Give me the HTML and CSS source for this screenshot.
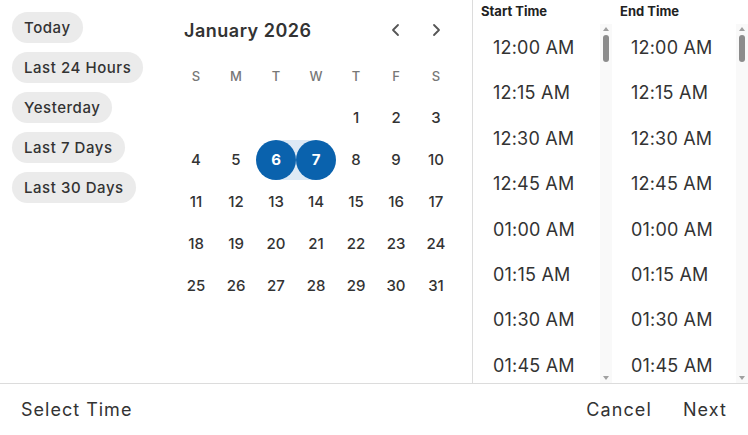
FILE: index.html
```html
<!DOCTYPE html>
<html lang="en">
<head>
  <meta charset="UTF-8" />
  <title>Select Time</title>
  <link rel="stylesheet" href="styles.css">
</head>
<body>
  <div class="picker">
    <div class="main">
      <aside class="presets">
        <button class="chip">Today</button>
        <button class="chip">Last 24 Hours</button>
        <button class="chip">Yesterday</button>
        <button class="chip">Last 7 Days</button>
        <button class="chip">Last 30 Days</button>
      </aside>

      <section class="calendar">
        <div class="cal-head">
          <span class="month">January 2026</span>
          <button class="nav" aria-label="Previous month">
            <svg width="12" height="14" viewBox="0 0 12 14"><path d="M8 2 L3 7 L8 12" fill="none" stroke="#555" stroke-width="1.8" stroke-linecap="round" stroke-linejoin="round"/></svg>
          </button>
          <button class="nav" aria-label="Next month">
            <svg width="12" height="14" viewBox="0 0 12 14"><path d="M4 2 L9 7 L4 12" fill="none" stroke="#555" stroke-width="1.8" stroke-linecap="round" stroke-linejoin="round"/></svg>
          </button>
        </div>
        <div class="grid weekdays">
          <span>S</span><span>M</span><span>T</span><span>W</span><span>T</span><span>F</span><span>S</span>
        </div>
        <div class="grid days">
          <span class="cell"></span><span class="cell"></span><span class="cell"></span><span class="cell"></span>
          <span class="cell"><b class="day">1</b></span>
          <span class="cell"><b class="day">2</b></span>
          <span class="cell"><b class="day">3</b></span>
          <span class="cell"><b class="day">4</b></span>
          <span class="cell"><b class="day">5</b></span>
          <span class="cell range-start"><b class="day selected">6</b></span>
          <span class="cell range-end"><b class="day selected">7</b></span>
          <span class="cell"><b class="day">8</b></span>
          <span class="cell"><b class="day">9</b></span>
          <span class="cell"><b class="day">10</b></span>
          <span class="cell"><b class="day">11</b></span>
          <span class="cell"><b class="day">12</b></span>
          <span class="cell"><b class="day">13</b></span>
          <span class="cell"><b class="day">14</b></span>
          <span class="cell"><b class="day">15</b></span>
          <span class="cell"><b class="day">16</b></span>
          <span class="cell"><b class="day">17</b></span>
          <span class="cell"><b class="day">18</b></span>
          <span class="cell"><b class="day">19</b></span>
          <span class="cell"><b class="day">20</b></span>
          <span class="cell"><b class="day">21</b></span>
          <span class="cell"><b class="day">22</b></span>
          <span class="cell"><b class="day">23</b></span>
          <span class="cell"><b class="day">24</b></span>
          <span class="cell"><b class="day">25</b></span>
          <span class="cell"><b class="day">26</b></span>
          <span class="cell"><b class="day">27</b></span>
          <span class="cell"><b class="day">28</b></span>
          <span class="cell"><b class="day">29</b></span>
          <span class="cell"><b class="day">30</b></span>
          <span class="cell"><b class="day">31</b></span>
        </div>
      </section>

      <section class="times">
        <div class="time-col start">
          <div class="time-head">Start Time</div>
          <div class="time-body">
            <ul class="time-list">
              <li>12:00 AM</li>
              <li>12:15 AM</li>
              <li>12:30 AM</li>
              <li>12:45 AM</li>
              <li>01:00 AM</li>
              <li>01:15 AM</li>
              <li>01:30 AM</li>
              <li>01:45 AM</li>
            </ul>
            <div class="scrollbar">
              <span class="arrow up"></span>
              <span class="thumb"></span>
              <span class="track"></span>
              <span class="arrow down"></span>
            </div>
          </div>
        </div>
        <div class="time-col end">
          <div class="time-head">End Time</div>
          <div class="time-body">
            <ul class="time-list">
              <li>12:00 AM</li>
              <li>12:15 AM</li>
              <li>12:30 AM</li>
              <li>12:45 AM</li>
              <li>01:00 AM</li>
              <li>01:15 AM</li>
              <li>01:30 AM</li>
              <li>01:45 AM</li>
            </ul>
            <div class="scrollbar">
              <span class="arrow up"></span>
              <span class="thumb"></span>
              <span class="track"></span>
              <span class="arrow down"></span>
            </div>
          </div>
        </div>
      </section>
    </div>

    <footer class="footer">
      <span class="footer-title">Select Time</span>
      <div class="actions">
        <button class="link">Cancel</button>
        <button class="link">Next</button>
      </div>
    </footer>
  </div>
</body>
</html>
```

FILE: styles.css
```css
body {
  font-family: Inter, "Noto Sans", sans-serif;
  background: #fff;
  color: #333;
  margin: 0;
  padding: 0;
}
button {
  font-family: inherit;
  border: none;
  background: none;
  padding: 0;
  color: inherit;
  cursor: pointer;
}
.picker {
  width: 748px;
  height: 435px;
  display: flex;
  flex-direction: column;
}
.main {
  height: 383px;
  display: flex;
  border-bottom: 1px solid #dcdcdc;
}

/* presets */
.presets {
  width: 164px;
  padding: 12px 0 0 12px;
  display: flex;
  flex-direction: column;
  align-items: flex-start;
  gap: 9px;
}
.chip {
  height: 31px;
  padding: 0 12px;
  border-radius: 16px;
  background: #ebebeb;
  font-size: 15px;
  font-weight: 500;
  letter-spacing: 0.55px;
  color: #333;
}

/* calendar */
.calendar {
  width: 280px;
  padding-top: 9px;
}
.cal-head {
  height: 42px;
  margin-bottom: 4px;
  display: flex;
  align-items: center;
}
.month {
  flex: 1;
  padding-left: 8px;
  font-size: 18px;
  font-weight: 600;
  letter-spacing: 0.5px;
  color: #333;
}
.nav {
  width: 40px;
  height: 40px;
  display: flex;
  align-items: center;
  justify-content: center;
}
.grid {
  display: grid;
  grid-template-columns: repeat(7, 40px);
}
.weekdays span {
  height: 42px;
  line-height: 42px;
  text-align: center;
  font-size: 13px;
  font-weight: 500;
  color: #777;
}
.cell {
  height: 40px;
  padding: 1px 0;
  background-clip: content-box;
}
.day {
  display: block;
  width: 40px;
  height: 40px;
  line-height: 40px;
  text-align: center;
  border-radius: 50%;
  font-size: 15px;
  font-weight: 500;
  color: #333;
}
.day.selected {
  background: #0a62ad;
  color: #fff;
  font-weight: 700;
}
.range-start {
  background-image: linear-gradient(90deg, transparent 50%, #dde9f5 50%);
}
.range-end {
  background-image: linear-gradient(90deg, #dde9f5 50%, transparent 50%);
}

/* time lists */
.times {
  flex: 1;
  margin-left: 16px;
  border-left: 1px solid #dcdcdc;
  display: flex;
}
.time-col {
  display: flex;
  flex-direction: column;
}
.time-col.start {
  width: 139px;
}
.time-col.end {
  flex: 1;
}
.time-head {
  height: 24px;
  line-height: 22px;
  padding-left: 8px;
  font-size: 13px;
  font-weight: 700;
  color: #222;
}
.time-body {
  flex: 1;
  display: flex;
  overflow: hidden;
}
.time-list {
  flex: 1;
  list-style: none;
  margin: 0;
  padding: 1px 0 0;
  overflow: hidden;
}
.time-list li {
  height: 45.4px;
  line-height: 46px;
  padding-left: 20px;
  font-size: 18px;
  letter-spacing: 0.2px;
  color: #333;
}
.end .time-list li {
  padding-left: 19px;
}
.scrollbar {
  width: 12px;
  flex-shrink: 0;
  display: flex;
  flex-direction: column;
  align-items: center;
  background: #f9f9f9;
}
.arrow {
  width: 0;
  height: 0;
  border-left: 3px solid transparent;
  border-right: 3px solid transparent;
}
.arrow.up {
  margin-top: 3px;
  border-bottom: 4px solid #a0a0a0;
}
.arrow.down {
  margin-bottom: 3px;
  border-top: 4px solid #a0a0a0;
}
.thumb {
  width: 6px;
  height: 27px;
  margin-top: 4px;
  border-radius: 3px;
  background: #8c8c8c;
}
.track {
  flex: 1;
}

/* footer */
.footer {
  flex: 1;
  display: flex;
  align-items: center;
  justify-content: space-between;
  padding: 0 21px;
}
.footer-title {
  font-size: 18px;
  letter-spacing: 1px;
  color: #333;
}
.actions {
  display: flex;
  gap: 31px;
}
.link {
  font-size: 18px;
  letter-spacing: 1.1px;
  color: #333;
}
```
